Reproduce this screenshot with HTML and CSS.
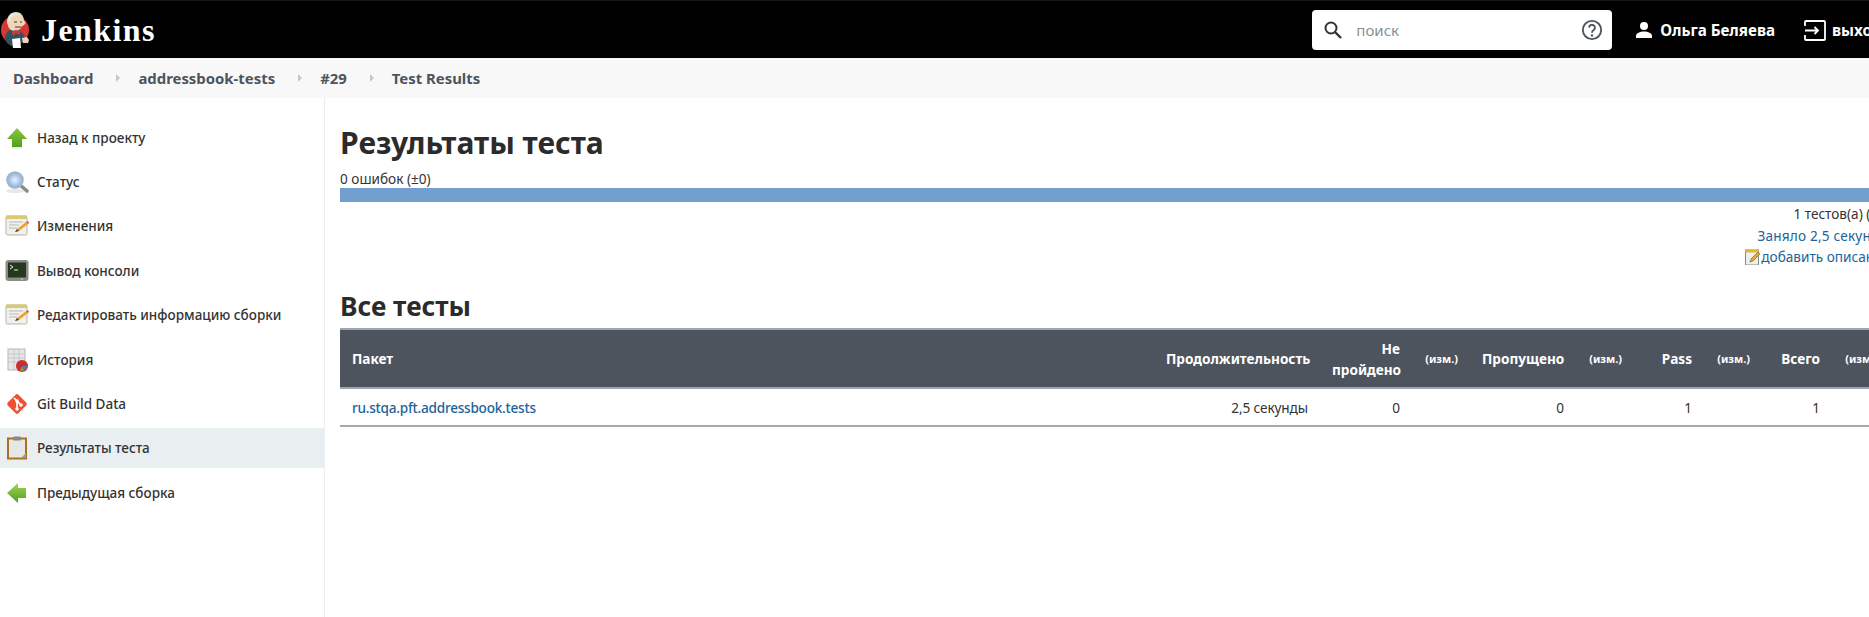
FILE: index.html
```html
<!DOCTYPE html>
<html lang="ru">
<head>
<meta charset="utf-8">
<title>Test Results</title>
<link rel="stylesheet" href="styles.css">
</head>
<body>
<div class="page">
  <header class="topbar">
    <a class="brand">
      <svg class="logo" viewBox="0 0 30 38" width="30" height="38">
        <circle cx="15" cy="19" r="14" fill="#d33833"/>
        <path d="M5 28c0-6 4-10 9-10s10 3 11 10l-2 3-5 4H11l-4-3z" fill="#335061"/>
        <path d="M7 11C7 5 11 1 16 1s8 4 8 9c1 0 2 1 1 3-1 1-2 2-3 2-1 3-4 5-7 5-4 0-7-3-7-6-1-1-1-2-1-3z" fill="#f0d6b7"/>
        <path d="M8 9c0-4 3-7 8-7 2 0 4 1 5 2-4-1-8 0-10 3l-1 4z" fill="#e7e7e7"/>
        <path d="M15 19l6 1-2 4-3-2-3 3-1-4z" fill="#d33833"/>
        <path d="M12 28l8-1 1 10H13z" fill="#fff"/>
        <path d="M22 27l5-1 2 3-1 3-5 0z" fill="#f0d6b7"/>
        <path d="M14 11h3M20 11h2M15 16h6" stroke="#49362a" stroke-width="1" fill="none"/>
      </svg>
      <span class="wordmark">Jenkins</span>
    </a>
    <div class="search">
      <svg class="search-icon" viewBox="0 0 20 20" width="20" height="20"><circle cx="8" cy="8" r="5.5" fill="none" stroke="#333" stroke-width="2"/><path d="M12 12l6 6" stroke="#333" stroke-width="2.4"/></svg>
      <span class="search-text">поиск</span>
      <svg class="help-icon" viewBox="0 0 24 24" width="22" height="22"><circle cx="12" cy="12" r="10" fill="none" stroke="#4d545d" stroke-width="2"/><path d="M8.8 9.4a3.2 3.2 0 1 1 5 2.7c-1.2.8-1.8 1.4-1.8 2.9" fill="none" stroke="#4d545d" stroke-width="2"/><circle cx="12" cy="18" r="1.3" fill="#4d545d"/></svg>
    </div>
    <a class="user">
      <svg viewBox="0 0 18 18" width="18" height="18"><circle cx="9" cy="5" r="4" fill="#fff"/><path d="M1 17v-2c0-3 4-4.500 8-4.500s8 1.500 8 4.500v2z" fill="#fff"/></svg>
      <span>Ольга Беляева</span>
    </a>
    <a class="logout">
      <svg viewBox="0 0 22 21" width="22" height="21"><path d="M1 6V2a1 1 0 0 1 1-1h18a1 1 0 0 1 1 1v17a1 1 0 0 1-1 1H2a1 1 0 0 1-1-1v-4" fill="none" stroke="#fff" stroke-width="1.800"/><path d="M1 10.500h13M10.500 7l3.500 3.500-3.500 3.500" fill="none" stroke="#fff" stroke-width="1.800"/></svg>
      <span>выход</span>
    </a>
  </header>

  <nav class="crumbs">
    <a class="crumb">Dashboard</a><span class="sep"></span>
    <a class="crumb">addressbook-tests</a><span class="sep"></span>
    <a class="crumb">#29</a><span class="sep"></span>
    <a class="crumb">Test Results</a>
  </nav>

  <div class="layout">
    <aside class="side">
      <a class="task">
        <svg viewBox="0 0 24 24" width="24" height="24"><defs><linearGradient id="gu" x1="0" y1="0" x2="0" y2="1"><stop offset="0" stop-color="#8cc63f"/><stop offset="1" stop-color="#4ea01c"/></linearGradient></defs><path d="M12 2l10 11h-5v8H7v-8H2z" fill="url(#gu)"/><path d="M7 22h10" stroke="#ddd"/></svg>
        <span>Назад к проекту</span>
      </a>
      <a class="task">
        <svg viewBox="0 0 24 24" width="24" height="24"><defs><radialGradient id="gl"><stop offset="0" stop-color="#e9f2fb"/><stop offset="1" stop-color="#88aede"/></radialGradient></defs><ellipse cx="10" cy="21" rx="9" ry="2" fill="#e8e8e8"/><path d="M15 15l7 6" stroke="#8b8b8b" stroke-width="3.600" stroke-linecap="round"/><circle cx="10" cy="10" r="8" fill="url(#gl)" stroke="#a9b4c0" stroke-width="1.600"/></svg>
        <span>Статус</span>
      </a>
      <a class="task">
        <svg viewBox="0 0 24 24" width="24" height="24"><use href="#note"/></svg>
        <span>Изменения</span>
      </a>
      <a class="task">
        <svg viewBox="0 0 24 24" width="24" height="24"><rect x="0.500" y="1" width="23" height="21" rx="3" fill="#8a8d85"/><rect x="3" y="3.500" width="18" height="15" fill="#26371f"/><path d="M5 6l3 2-3 2M9 11h4" stroke="#e6efe0" stroke-width="1" fill="none"/><rect x="16" y="19.500" width="2" height="1" fill="#cfe3b0"/></svg>
        <span>Вывод консоли</span>
      </a>
      <a class="task">
        <svg viewBox="0 0 24 24" width="24" height="24"><use href="#note"/></svg>
        <span>Редактировать информацию сборки</span>
      </a>
      <a class="task">
        <svg viewBox="0 0 24 24" width="24" height="24"><rect x="3" y="1" width="17" height="21" fill="#e6e6e6" stroke="#b5b5b5"/><path d="M4 6h15M4 10h15M4 14h15M9 2v19M14 2v19" stroke="#c0c0c0" stroke-width="0.800"/><circle cx="17" cy="18" r="6" fill="#cc2d2d"/><path d="M17 18l5 0a5 5 0 0 1-3 4.500z" fill="#4a7fc0"/><path d="M17 18l-2 4.500a5 5 0 0 0 4 0z" fill="#7aa83a"/></svg>
        <span>История</span>
      </a>
      <a class="task">
        <svg viewBox="0 0 24 24" width="24" height="24"><rect x="4.500" y="4.500" width="15" height="15" rx="2" transform="rotate(45 12 12)" fill="#f05133"/><path d="M9 6l7 7M12 9v8" stroke="#fff" stroke-width="1.700"/><circle cx="12" cy="9" r="1.800" fill="#fff"/><circle cx="16" cy="13" r="1.800" fill="#fff"/><circle cx="12" cy="17" r="1.800" fill="#fff"/></svg>
        <span>Git Build Data</span>
      </a>
      <a class="task active">
        <svg viewBox="0 0 24 24" width="24" height="24"><rect x="3" y="2.500" width="18" height="20" fill="#e7e7e7" stroke="#a8701f" stroke-width="2"/><rect x="8" y="0.500" width="8" height="4" rx="1" fill="#8a8a85"/><path d="M16 22l5-5v5z" fill="#9a9a9a"/></svg>
        <span>Результаты теста</span>
      </a>
      <a class="task">
        <svg viewBox="0 0 24 24" width="24" height="24"><defs><linearGradient id="gb" x1="0" y1="0" x2="0" y2="1"><stop offset="0" stop-color="#a6d45a"/><stop offset="1" stop-color="#4ea01c"/></linearGradient></defs><path d="M2 12L13 2v5h8v10h-8v5z" fill="url(#gb)"/></svg>
        <span>Предыдущая сборка</span>
      </a>
      <svg class="defs" width="0" height="0"><defs>
        <g id="note"><rect x="1" y="2" width="21" height="19" rx="1.500" fill="#f1f1ec" stroke="#b5b5ad"/><rect x="1" y="1.500" width="21" height="3.500" fill="#d9c77a"/><path d="M4 8h14M4 11h10M4 14h8" stroke="#b9b9b9"/><path d="M10 18l2-3 9-7 2 2-9 7z" fill="#e8a33a"/><path d="M21 8l2 2 1-1-1-2z" fill="#d8553f"/><path d="M10 18l2-3 2 2z" fill="#444"/></g>
      </defs></svg>
    </aside>

    <main class="main">
      <h1 class="title">Результаты теста</h1>
      <div class="fails">0 ошибок (±0)</div>
      <div class="bar"></div>
      <div class="summary">
        <div>1 тестов(а) (±0)</div>
        <a class="link took">Заняло 2,5 секунды</a>
        <a class="link add">
          <svg viewBox="0 0 16 16" width="16" height="16"><rect x="0.500" y="1" width="13" height="15" fill="#eee" stroke="#8a8a8a"/><rect x="0.500" y="0.500" width="13" height="3" fill="#e3b93a"/><path d="M5 13l1-3 7-7 2 2-7 7z" fill="#e2a63a" stroke="#5a4a20" stroke-width="0.500"/></svg><span>добавить описание</span>
        </a>
      </div>
      <h2 class="subtitle">Все тесты</h2>
      <table class="results">
        <colgroup>
          <col class="c-pkg"><col class="c-dur"><col class="c-fail"><col class="c-diff"><col class="c-skip"><col class="c-diff"><col class="c-num"><col class="c-diff"><col class="c-num"><col class="c-diff">
        </colgroup>
        <thead>
          <tr>
            <th class="left">Пакет</th>
            <th>Продолжительность</th>
            <th>Не пройдено</th>
            <th class="diff">(изм.)</th>
            <th>Пропущено</th>
            <th class="diff">(изм.)</th>
            <th>Pass</th>
            <th class="diff">(изм.)</th>
            <th>Всего</th>
            <th class="diff">(изм.)</th>
          </tr>
        </thead>
        <tbody>
          <tr>
            <td class="left"><a class="link pkg">ru.stqa.pft.addressbook.tests</a></td>
            <td class="dur">2,5 секунды</td>
            <td>0</td><td></td>
            <td>0</td><td></td>
            <td>1</td><td></td>
            <td>1</td><td></td>
          </tr>
        </tbody>
      </table>
    </main>
  </div>
</div>
</body>
</html>
```
FILE: styles.css
```css
html, body {
  margin: 0;
  padding: 0;
  overflow: hidden;
  background: #fff;
}
body {
  font-family: "Noto Sans", "Open Sans", sans-serif;
  font-size: 13.6px;
  color: #333;
}
.page {
  width: 1906px;
  height: 617px;
  display: flex;
  flex-direction: column;
}
.topbar {
  height: 58px;
  box-sizing: border-box;
  background: #000;
  border-top: 1px solid #161616;
  padding-top: 1px;
  display: flex;
  align-items: center;
  color: #fff;
  flex: none;
}
.brand {
  display: flex;
  align-items: center;
  flex: 1;
}
.logo { display: block; }
.wordmark {
  font-family: "Liberation Serif", serif;
  font-weight: 700;
  font-size: 32px;
  margin-left: 11px;
  letter-spacing: 1.4px;
}
.search {
  width: 300px;
  height: 40px;
  box-sizing: border-box;
  background: #fff;
  border-radius: 4px;
  display: flex;
  align-items: center;
  padding: 0 9px 0 11px;
  flex: none;
}
.search-text {
  flex: 1;
  margin-left: 13px;
  color: #8a8f94;
  font-size: 15px;
}
.help-icon { display: block; }
.user {
  display: flex;
  align-items: center;
  margin-left: 23px;
  gap: 7px;
  font-weight: 700;
  font-size: 15.2px;
  flex: none;
}
.logout {
  display: flex;
  align-items: center;
  margin-left: 29px;
  gap: 6px;
  font-weight: 700;
  font-size: 15.2px;
  flex: none;
  width: 102px;
}
.crumbs {
  height: 40px;
  background: #f8f8f8;
  display: flex;
  align-items: center;
  padding-left: 13px;
  font-weight: 700;
  font-size: 14.9px;
  color: #4d545d;
  flex: none;
}
.sep {
  width: 0;
  height: 0;
  border-left: 4px solid #c4c7ca;
  border-top: 4px solid transparent;
  border-bottom: 4px solid transparent;
  margin: 0 18px 0 23px;
}
.layout {
  flex: 1;
  display: flex;
  min-height: 0;
}
.side {
  width: 325px;
  box-sizing: border-box;
  border-right: 1px solid #e9eef1;
  padding-top: 19.6px;
  display: flex;
  flex-direction: column;
  gap: 4.4px;
  flex: none;
}
.task {
  height: 40px;
  display: flex;
  align-items: center;
  padding-left: 5px;
  gap: 8px;
  font-weight: 500;
  font-size: 13.5px;
  color: #333;
}
.task svg { flex: none; }
.task.active { background: #e9eef1; }
.defs { position: absolute; }
.main {
  flex: 1;
  padding: 0 15px;
  min-width: 0;
}
.title {
  margin: 23px 0 0;
  font-size: 30px;
  line-height: 44px;
  font-weight: 700;
  color: #2b2b2b;
}
.fails {
  margin-top: 4px;
  line-height: 19px;
}
.bar {
  height: 14px;
  background: #729fcf;
}
.summary {
  display: flex;
  flex-direction: column;
  align-items: flex-end;
  width: 1550px;
  line-height: 21.5px;
  margin-top: 1px;
}
.link { color: #20639b; }
.took { letter-spacing: 0.2px; }
.add {
  display: flex;
  align-items: center;
}
.add svg { display: block; }
.subtitle {
  margin: 18.5px 0 2px;
  font-size: 26.3px;
  line-height: 40px;
  font-weight: 700;
  color: #2b2b2b;
}
.results {
  width: 1550px;
  table-layout: fixed;
  border-collapse: collapse;
}
.c-pkg { width: 814px; }
.c-dur { width: 166px; }
.c-fail { width: 92px; }
.c-diff { width: 58px; }
.c-skip { width: 106px; }
.c-num { width: 70px; }
.results th, .results td {
  padding: 0 12px;
  text-align: right;
}
.results th {
  height: 57px;
  background: #4d545d;
  color: #fff;
  font-size: 13.6px;
  font-weight: 700;
  line-height: 21px;
  border-top: 2px solid #9ba7af;
  border-bottom: 2px solid #9ba7af;
}
.results th.diff { font-size: 11px; }
.results th.left, .results td.left { text-align: left; }
.results td {
  height: 36px;
  border-bottom: 2px solid #a4a9ae;
}
.results .dur { letter-spacing: -0.1px; }
.pkg {
  font-weight: 500;
  letter-spacing: -0.24px;
}
```
